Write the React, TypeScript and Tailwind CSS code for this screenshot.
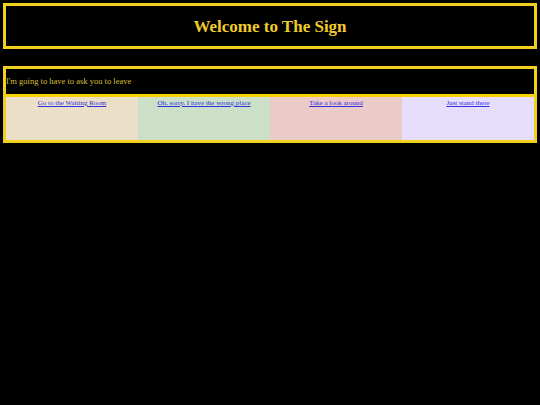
export default function App() {
  const options = [
    { label: 'Go to the Waiting Room', bg: 'bg-[#ebdfc7]' },
    { label: 'Oh, sorry, I have the wrong place', bg: 'bg-[#cbe0c7]' },
    { label: 'Take a look around', bg: 'bg-[#ebcbc7]' },
    { label: 'Just stand there', bg: 'bg-[#e7defc]' },
  ];

  return (
    <div className="min-h-screen bg-black p-[3px] font-['Liberation_Serif',serif]">
      <div className="h-[46px] border-[3px] border-[#f2d01e] flex items-center justify-center">
        <h1 className="text-[17px] font-bold text-[#f0cb2a] mt-[2px]">Welcome to The Sign</h1>
      </div>

      <div className="mt-[17px] border-[3px] border-[#f2d01e]">
        <p className="h-[25px] flex items-center text-[8.5px] text-[#d8bf3a]">
          I'm going to have to ask you to leave
        </p>
        <div className="grid grid-cols-4 h-[46px] border-t-[3px] border-[#f5d200]">
          {options.map(o => (
            <div key={o.label} className={`${o.bg} text-center leading-[6px]`}>
              <a href="#" className="text-[7px] text-[#3030e0] underline">{o.label}</a>
            </div>
          ))}
        </div>
      </div>
    </div>
  );
}
